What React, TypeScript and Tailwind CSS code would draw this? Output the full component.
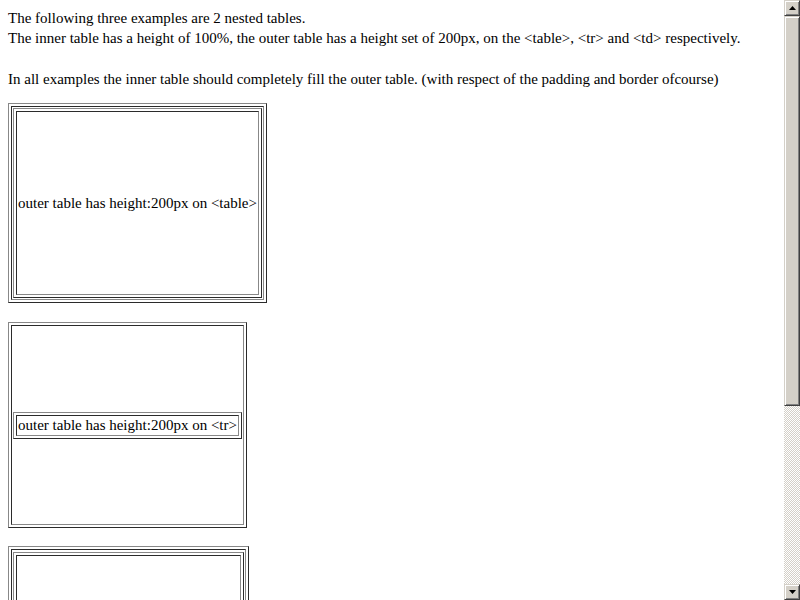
const cellBorder =
  "border border-t-[#2b2b2b] border-l-[#2b2b2b] border-b-[#888888] border-r-[#888888] p-px leading-[17px]";
const tableBorder =
  "border-separate border-spacing-[2px] border border-t-[#888888] border-l-[#888888] border-b-[#2b2b2b] border-r-[#2b2b2b]";

const Arrow = ({ down }: { down?: boolean }) => (
  <svg width="7" height="4" viewBox="0 0 7 4" className="block">
    {down ? <polygon points="0,0 7,0 3.5,4" fill="#000" /> : <polygon points="3.5,0 7,4 0,4" fill="#000" />}
  </svg>
);

const ScrollButton = ({ down }: { down?: boolean }) => (
  <div className="flex h-4 w-4 shrink-0 items-center justify-center border border-t-[#d4d0c8] border-l-[#d4d0c8] border-b-[#404040] border-r-[#404040] bg-[#d4d0c8] shadow-[inset_1px_1px_0_#fff,inset_-1px_-1px_0_#808080]">
    <Arrow down={down} />
  </div>
);

const Scrollbar = () => (
  <div className="flex h-full w-4 shrink-0 flex-col bg-[repeating-conic-gradient(#d4d0c8_0_25%,#ffffff_0_50%)] bg-[length:2px_2px]">
    <ScrollButton />
    <div className="h-[390px] shrink-0 border border-t-[#d4d0c8] border-l-[#d4d0c8] border-b-[#404040] border-r-[#404040] bg-[#d4d0c8] shadow-[inset_1px_1px_0_#fff,inset_-1px_-1px_0_#808080]" />
    <div className="flex-1" />
    <ScrollButton down />
  </div>
);

export default function App() {
  return (
    <div className="flex h-screen w-full overflow-hidden bg-white font-['Liberation_Serif',serif] text-[15px] leading-[20px] text-black">
      <div className="flex-1 overflow-hidden p-2">
        <div>The following three examples are 2 nested tables.</div>
        <div>
          The inner table has a height of 100%, the outer table has a height set of 200px, on the &lt;table&gt;,
          &lt;tr&gt; and &lt;td&gt; respectively.
        </div>
        <div className="mt-[21px]">
          In all examples the inner table should completely fill the outer table. (with respect of the padding and
          border ofcourse)
        </div>

        <table className={`mt-[14px] h-[200px] ${tableBorder}`}>
          <tbody>
            <tr>
              <td className={cellBorder}>
                <table className={`h-[190px] ${tableBorder}`}>
                  <tbody>
                    <tr>
                      <td className={cellBorder}>outer table has height:200px on &lt;table&gt;</td>
                    </tr>
                  </tbody>
                </table>
              </td>
            </tr>
          </tbody>
        </table>

        <table className={`mt-[19px] ${tableBorder}`}>
          <tbody>
            <tr className="h-[200px]">
              <td className={cellBorder}>
                <table className={tableBorder}>
                  <tbody>
                    <tr>
                      <td className={cellBorder}>outer table has height:200px on &lt;tr&gt;</td>
                    </tr>
                  </tbody>
                </table>
              </td>
            </tr>
          </tbody>
        </table>

        <table className={`mt-[18px] ${tableBorder}`}>
          <tbody>
            <tr>
              <td className={`h-[200px] ${cellBorder}`}>
                <table className={`h-[194px] ${tableBorder}`}>
                  <tbody>
                    <tr>
                      <td className={cellBorder}>outer table has height:200px on &lt;td&gt;</td>
                    </tr>
                  </tbody>
                </table>
              </td>
            </tr>
          </tbody>
        </table>
      </div>
      <Scrollbar />
    </div>
  );
}
